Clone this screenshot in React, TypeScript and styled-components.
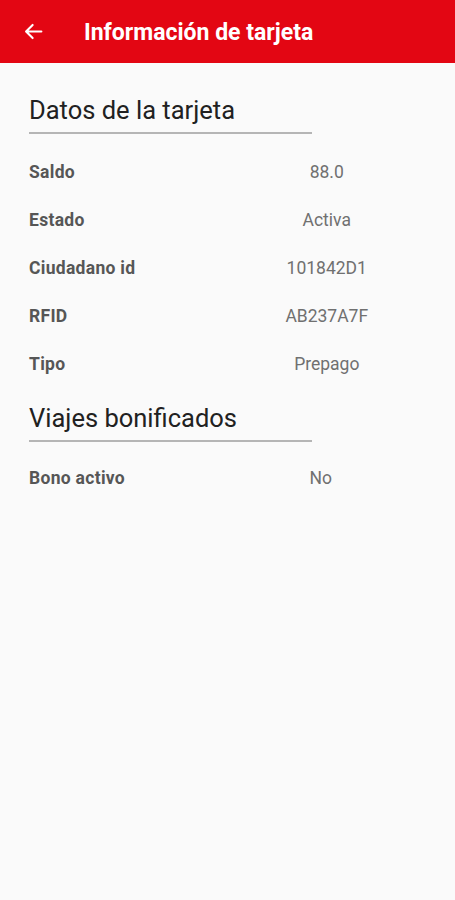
import React from "react";
import styled, { createGlobalStyle } from "styled-components";

const GlobalStyle = createGlobalStyle`
  html, body {
    margin: 0;
    padding: 0;
    background: #fafafa;
    font-family: Roboto, "Liberation Sans", sans-serif;
  }
`;

type Item = { label: string; value: string };

const sections: { title: string; valueShift: number; items: Item[] }[] = [
  {
    title: "Datos de la tarjeta",
    valueShift: 0,
    items: [
      { label: "Saldo", value: "88.0" },
      { label: "Estado", value: "Activa" },
      { label: "Ciudadano id", value: "101842D1" },
      { label: "RFID", value: "AB237A7F" },
      { label: "Tipo", value: "Prepago" },
    ],
  },
  {
    title: "Viajes bonificados",
    valueShift: 8,
    items: [{ label: "Bono activo", value: "No" }],
  },
];

const Page = styled.div`
  min-height: 900px;
  background: #fafafa;
`;

const TopBar = styled.header`
  height: 63px;
  background: #e30613;
  display: flex;
  align-items: center;
  padding-left: 22px;
  box-sizing: border-box;
  color: #fff;
`;

const BackButton = styled.button`
  width: 22px;
  height: 22px;
  padding: 0;
  border: none;
  background: transparent;
  color: #fff;
  display: flex;
  align-items: center;
  justify-content: center;
  margin-right: 40px;
`;

const Title = styled.h1`
  margin: 0;
  font-size: 23px;
  font-weight: 700;
  margin-top: 2px;
`;

const Content = styled.main`
  padding: 0 29px;
`;

const Section = styled.section`
  padding-top: 32px;
  &:not(:first-child) {
    padding-top: 15px;
  }
`;

const SectionTitle = styled.h2`
  margin: 0;
  width: 283px;
  font-size: 25.5px;
  font-weight: 400;
  color: #212121;
  padding-bottom: 7px;
  border-bottom: 2px solid #b5b5b5;
  line-height: 30px;
`;

const List = styled.div<{ $gap: number }>`
  padding-top: ${(p) => p.$gap}px;
`;

const Row = styled.div`
  display: flex;
  align-items: center;
  height: 48px;
`;

const Label = styled.span`
  flex: 1;
  font-size: 17.5px;
  font-weight: 700;
  letter-spacing: 0.3px;
  color: #565656;
`;

const Value = styled.span<{ $shift: number }>`
  flex: 1;
  text-align: center;
  font-size: 17.5px;
  color: #707070;
  padding-right: ${(p) => p.$shift}px;
`;

const App: React.FC = () => (
  <Page>
    <GlobalStyle />
    <TopBar>
      <BackButton aria-label="Volver">
        <svg width="21" height="21" viewBox="0 0 24 24" fill="none">
          <path
            d="M21 12H4M11 4.5L3.5 12l7.5 7.5"
            stroke="#fff"
            strokeWidth="2.4"
            strokeLinecap="round"
            strokeLinejoin="round"
          />
        </svg>
      </BackButton>
      <Title>Información de tarjeta</Title>
    </TopBar>
    <Content>
      {sections.map((section, i) => (
        <Section key={section.title}>
          <SectionTitle>{section.title}</SectionTitle>
          <List $gap={i === 0 ? 14 : 12}>
            {section.items.map((item) => (
              <Row key={item.label}>
                <Label>{item.label}</Label>
                <Value $shift={section.valueShift}>{item.value}</Value>
              </Row>
            ))}
          </List>
        </Section>
      ))}
    </Content>
  </Page>
);

export default App;
